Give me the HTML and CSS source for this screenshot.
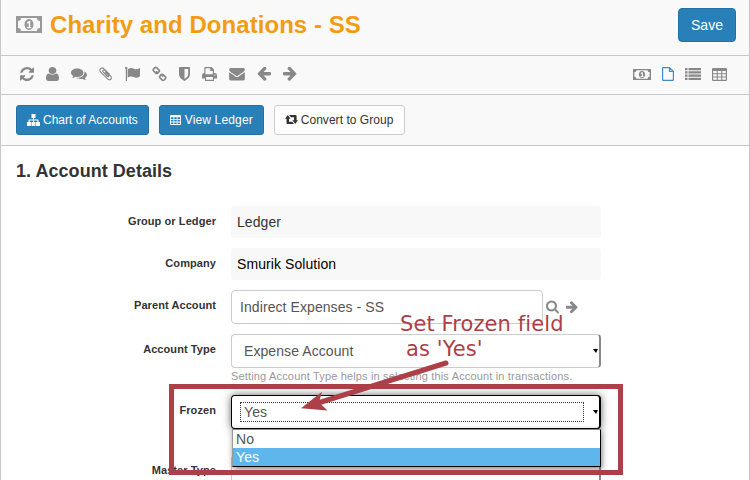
FILE: index.html
```html
<!DOCTYPE html>
<html lang="en">
<head>
<meta charset="utf-8">
<title>Charity and Donations - SS</title>
<link rel="stylesheet" href="styles.css">
</head>
<body>
<svg class="defs" width="0" height="0" aria-hidden="true">
  <symbol id="money" viewBox="0 0 26 17" preserveAspectRatio="none"><path fill-rule="evenodd" d="M0 0H26V17H0ZM5 2A3 3 0 0 1 2 5V12A3 3 0 0 1 5 15H21A3 3 0 0 1 24 12V5A3 3 0 0 1 21 2ZM13 3C19 3 19 14 13 14S7 3 13 3ZM10.700 6.800L12 7.700 12.700 7V11H11V12.200H15.300V11H14.300V5H12.800Z"/></symbol>
  <symbol id="right" viewBox="0 0 1536 1536"><path transform="matrix(-1 0 0 1 1536 32)" d="M1536 640v128q0 53-32.500 90.500t-84.500 37.500h-704l293 294q38 36 38 90t-38 90l-75 76q-37 37-90 37-52 0-91-37l-651-652q-37-37-37-90 0-52 37-91l651-650q38-38 91-38 52 0 90 38l75 74q38 38 38 91t-38 91l-293 293h704q52 0 84.500 37.500t32.500 90.500z"/></symbol>
  <symbol id="table" viewBox="0 0 15 13"><path fill-rule="evenodd" d="M1.300 0H13.700A1.300 1.300 0 0 1 15 1.300V11.700A1.300 1.300 0 0 1 13.700 13H1.300A1.300 1.300 0 0 1 0 11.700V1.300A1.300 1.300 0 0 1 1.300 0ZM1.200 3V5.200H4.700V3ZM5.800 3V5.200H9.200V3ZM10.300 3V5.200H13.800V3ZM1.200 6.300V8.500H4.700V6.300ZM5.800 6.300V8.500H9.200V6.300ZM10.300 6.300V8.500H13.800V6.300ZM1.200 9.600V11.800H4.700V9.600ZM5.800 9.600V11.800H9.200V9.600ZM10.300 9.600V11.800H13.800V9.600Z"/></symbol>
</svg>

<main class="page">
  <header class="titlebar">
    <svg class="title-icon" width="26" height="17"><use href="#money"/></svg>
    <h1>Charity and Donations - SS</h1>
    <button class="save">Save</button>
  </header>

  <nav class="toolbar">
    <div class="tools">
      <svg width="14" height="14" viewBox="0 0 1536 1536"><path d="M1511 928q0 5-1 7-64 268-268 434.500t-478 166.500q-146 0-282.500-55t-243.500-157l-129 129q-19 19-45 19t-45-19-19-45v-448q0-26 19-45t45-19h448q26 0 45 19t19 45-19 45l-137 137q71 66 161 102t187 36q134 0 250-65t186-179q11-17 53-117 8-23 30-23h192q13 0 22.500 9.500t9.500 22.500zm25-800v448q0 26-19 45t-45 19h-448q-26 0-45-19t-19-45 19-45l138-138q-148-137-349-137-134 0-250 65t-186 179q-11 17-53 117-8 23-30 23h-199q-13 0-22.500-9.500t-9.500-22.500v-7q65-268 270-434.500t480-166.500q146 0 284 55.500t245 156.500l130-129q19-19 45-19t45 19 19 45z"/></svg>
      <svg width="13" height="14" viewBox="256 128 1280 1536" preserveAspectRatio="none"><path d="M1536 1399q0 109-62.500 187t-150.500 78h-854q-88 0-150.500-78t-62.500-187q0-85 8.500-160.500t31.500-152 58.500-131 94-89 134.500-34.500q131 128 313 128t313-128q76 0 134.500 34.500t94 89 58.500 131 31.500 152 8.500 160.500zm-256-887q0 159-112.500 271.500t-271.500 112.500-271.500-112.500-112.500-271.500 112.500-271.500 271.500-112.500 271.500 112.500 112.500 271.500z"/></svg>
      <svg width="16" height="14" viewBox="0 0 16 14"><path d="M6.200 1.500C9.700 1.500 12.400 3.300 12.400 5.700S9.700 9.900 6.200 9.900C5.600 9.900 5 9.800 4.500 9.700 3.500 10.500 2.200 11 1 11 1.700 10.400 2.100 9.700 2.200 8.900 .8 8.100 0 7 0 5.700 0 3.300 2.700 1.500 6.200 1.500ZM13.500 4.400C15 5.200 16 6.400 16 7.800 16 9 15.200 10.100 13.900 10.900 14 11.700 14.500 12.600 15.200 13.200 13.900 13.200 12.600 12.600 11.600 11.800 9 12.300 6.600 11.800 5.300 10.800 10 11 13.900 8.400 13.500 4.400Z"/></svg>
      <svg class="clip" width="14" height="14" viewBox="0 0 14 14"><path d="M10.200 7 5 1.800C2.500-.4-.6 2.500 1.700 5.100L8.500 11.900C10.900 14.200 13.700 11.500 11.600 9L5.900 3.300C4.600 2.300 3 3.700 4.100 5L8.500 9.500C9.500 10.200 10.300 9.300 9.500 8.500L6.300 5.300"/></svg>
      <svg width="15" height="14" viewBox="0 0 15 14"><path d="M0 1.200A1.200 1.200 0 1 1 2 2.100V14H.8V2.100A1.200 1.200 0 0 1 0 1.200ZM2.600 2.400C6 .3 7.200 1 9.600 2 11.400 2.800 13 1.900 14.400 1.200 14.800 1 15 1.200 15 1.600V9C15 9.500 14.600 9.700 14 10 8.800 12.500 8.500 7.400 2.600 10.700Z"/></svg>
      <svg class="link" width="15" height="16" viewBox="0 0 15 16"><path d="M5.600 7.200 6.800 6Q7.900 4.900 6.800 3.800L4.900 1.900Q3.800.9 2.700 1.900L1.700 2.900Q.8 3.900 1.700 5L3.600 6.900Q4.600 7.900 5.700 7.100L4.600 5.800M9.200 8.600 8.100 9.800Q7.100 10.800 8.100 11.900L10 13.800Q11.100 14.800 12.200 13.800L13.200 12.800Q14.200 11.700 13.200 10.700L11.300 8.800Q10.200 7.900 9.200 8.600L10.500 9.900"/></svg>
      <svg width="11" height="14" viewBox="0 0 11 14"><path fill-rule="evenodd" d="M.7 0H10.300Q11 0 11 .7V7C11 10.500 8 12.600 5.500 14 3 12.600 0 10.500 0 7V.7Q0 0 .7 0ZM5.500 2V11.900C7.200 10.900 9.200 9.300 9.200 7V2Z"/></svg>
      <svg width="15" height="14" viewBox="0 0 15 14"><path fill-rule="evenodd" d="M3.300 0H9.600L12 2.400V6H12.700Q15 6 15 8.300V11.500H12V14H3V11.500H0V8.300Q0 6 2.300 6H2.300V1Q2.300 0 3.300 0ZM3.500 1.200V7.200H10.800V4H8.200V1.200ZM4.100 10V12.800H10.900V10ZM12.900 7.400A.7 .7 0 1 0 12.900 8.800 .7 .7 0 1 0 12.900 7.400Z"/></svg>
      <svg width="16" height="14" viewBox="0 128 1792 1600"><path d="M1792 710v794q0 66-47 113t-113 47h-1472q-66 0-113-47t-47-113v-794q44 49 101 87 362 246 497 345 57 42 92.500 65.500t94.500 48 110 24.500h2q51 0 110-24.500t94.500-48 92.500-65.500q170-123 498-345 57-39 100-87zm0-294q0 79-49 151t-122 123q-376 261-468 325-10 7-42.500 31t-54 38.800-52 32.500-57.500 27-50 9h-2q-23 0-50-9t-57.500-27-52-32.500-54-38.800-42.500-31q-91-64-262-182.500t-205-142.500q-62-42-117-115.500t-55-136.500q0-78 41.500-130t118.500-52h1472q65 0 112.500 47t47.500 113z"/></svg>
      <svg class="flip" width="14" height="14"><use href="#right"/></svg>
      <svg width="14" height="14"><use href="#right"/></svg>
    </div>
    <div class="views">
      <svg width="18" height="11"><use href="#money"/></svg>
      <svg class="active" width="12" height="14" viewBox="0 0 12 14"><path fill="none" stroke="currentColor" stroke-width="1.200" stroke-linejoin="round" d="M7.500.6H1.200Q.6.600 .6 1.200V12.800Q.6 13.400 1.200 13.400H10.800Q11.400 13.400 11.400 12.800V4.500L7.500.6V4.500H11.400"/></svg>
      <svg width="16" height="12" viewBox="0 0 16 12"><path d="M0 0H2.500V2.200H0ZM3.500 0H16V2.200H3.500ZM0 3.200H2.500V5.400H0ZM3.500 3.200H16V5.400H3.500ZM0 6.500H2.500V8.700H0ZM3.500 6.500H16V8.700H3.500ZM0 9.800H2.500V12H0ZM3.500 9.800H16V12H3.500Z"/></svg>
      <svg width="15" height="13"><use href="#table"/></svg>
    </div>
  </nav>

  <div class="actions">
    <button class="btn primary"><svg width="13" height="12" viewBox="0 0 13 12"><path d="M4.500 0H8.500V4H7V5.400H10.700Q11.500 5.400 11.500 6.200V8H13V12H9V8H10.300V6.500H7V8H8.500V12H4.500V8H6V6.500H2.700V8H4V12H0V8H1.500V6.200Q1.500 5.400 2.300 5.400H6V4H4.500Z"/></svg>Chart of Accounts</button>
    <button class="btn primary ledger"><svg width="11" height="10" viewBox="0 0 15 13" preserveAspectRatio="none"><use href="#table" width="15" height="13"/></svg>View Ledger</button>
    <button class="btn convert"><svg width="13" height="10" viewBox="0 0 13 10"><path d="M2.800 0 5.600 3.700H4V6.800H7.300L9 9H2.700Q1.500 9 1.500 7.900V3.700H0ZM4.100 0H10.400Q11.600 0 11.600 1.200V5.300H13L10.200 9 7.400 5.300H9V2.200H5.800Z"/></svg>Convert to Group</button>
  </div>

  <section class="form">
    <h2>1. Account Details</h2>
    <div class="row"><label>Group or Ledger</label><div class="static">Ledger</div></div>
    <div class="row"><label>Company</label><div class="static dark">Smurik Solution</div></div>
    <div class="row"><label>Parent Account</label>
      <div class="input-line">
        <div class="input">Indirect Expenses - SS</div>
        <svg width="13" height="14" viewBox="64 128 1664 1664"><path d="M1216 832q0-185-131.500-316.500t-316.500-131.500-316.500 131.500-131.500 316.500 131.500 316.500 316.500 131.500 316.500-131.500 131.500-316.500zm512 832q0 52-38 90t-90 38q-54 0-90-38l-343-342q-179 124-399 124-143 0-273.500-55.500t-225-150-150-225-55.500-273.500 55.500-273.500 150-225 225-150 273.500-55.500 273.500 55.500 225 150 150 225 55.500 273.500q0 220-124 399l343 343q37 37 37 90z"/></svg>
        <svg width="12" height="13"><use href="#right"/></svg>
      </div>
    </div>
    <div class="row"><label>Account Type</label>
      <div class="field">
        <div class="select"><span class="value">Expense Account</span><i class="caret"></i></div>
        <p class="help">Setting Account Type helps in selecting this Account in transactions.</p>
      </div>
    </div>
    <div class="row frozen"><label>Frozen</label>
      <div class="field">
        <div class="select focused"><span class="value">Yes</span><i class="caret"></i></div>
        <div class="menu"><div>No</div><div class="chosen">Yes</div></div>
      </div>
    </div>
    <div class="row"><label>Master Type</label><div class="field"><div class="select"></div></div></div>
  </section>

  <svg class="annotation" width="750" height="480" viewBox="0 0 750 480">
    <rect x="171.500" y="386.500" width="449" height="86" fill="none" stroke="#ac3f47" stroke-width="5"/>
    <path d="M446 363 318 403" stroke="#ac3f47" stroke-width="5" stroke-linecap="round"/>
    <path d="M301 408.300 322 391.700 319 402.500 327.500 410.500Z" fill="#ac3f47"/>
    <text x="400" y="331">Set Frozen field</text>
    <text x="406" y="356">as 'Yes'</text>
  </svg>
</main>
</body>
</html>
```
FILE: styles.css
```css
* { box-sizing: border-box; }

body {
  margin: 0;
  font-family: "Liberation Sans", Arial, sans-serif;
  font-size: 14px;
  color: #333;
  background: #fff;
}

button { font-family: inherit; }

svg { display: block; flex: none; fill: currentColor; }

.defs { position: absolute; }

.page {
  position: relative;
  width: 750px;
  height: 480px;
  overflow: hidden;
  border: solid #c7c7c7;
  border-width: 0 1px;
}

.titlebar, .toolbar, .actions {
  display: flex;
  background: #f9f9f9;
  border-bottom: 1px solid #c7c7c7;
}

.titlebar { height: 56px; padding: 8px 13px 0 15px; }
.title-icon { margin: 8px 8px 0 0; color: #999; }

h1 {
  flex: 1;
  margin: 0;
  padding-top: 3px;
  font-size: 24px;
  line-height: 28px;
  letter-spacing: .06px;
  color: #f39c12;
}

.save {
  width: 58px;
  height: 34px;
  padding: 0;
  border: 1px solid #2472a4;
  border-radius: 4px;
  background: #2980b9;
  color: #fff;
  font-size: 14px;
}

.toolbar {
  height: 39px;
  padding: 0 21px 2px 19px;
  justify-content: space-between;
  align-items: center;
  color: #888;
}

.tools, .views { display: flex; align-items: center; }
.tools { gap: 12px; }
.views { gap: 11px; margin-right: 1px; }
.flip { transform: scaleX(-1); }
.active { color: #428bca; }
.clip, .link { fill: none; stroke: currentColor; stroke-linecap: round; }
.clip { stroke-width: 1.1; }
.link { stroke-width: 1.7; }

.actions { height: 51px; padding: 10px 15px; gap: 10px; }

.btn {
  display: flex;
  align-items: center;
  height: 30px;
  padding: 0 10px;
  gap: 3px;
  border: 1px solid #ccc;
  border-radius: 3px;
  background: #fff;
  color: #333;
  font-size: 12px;
  line-height: 18px;
  white-space: nowrap;
}

.primary { border-color: #2472a4; background: #2980b9; color: #fff; }
.ledger { width: 105px; gap: 4px; letter-spacing: .15px; }
.convert { width: 131px; letter-spacing: .04px; }

.form { padding: 0 15px; letter-spacing: .08px; }

h2 { margin: 15px 0 25px; font-size: 18px; line-height: 20px; letter-spacing: .04px; }

.row { display: flex; gap: 15px; margin-bottom: 10px; }

.row label {
  width: 200px;
  padding-top: 8px;
  text-align: right;
  font-size: 11px;
  font-weight: bold;
  line-height: 14px;
  letter-spacing: .08px;
}

.static {
  width: 370px;
  height: 32px;
  padding: 0 6px;
  border-radius: 3px;
  background: #f8f8f8;
  line-height: 32px;
}

.dark { color: #000; }

.input-line { display: flex; align-items: center; color: #888; }
.input-line svg { margin-left: 3px; }
.input-line svg + svg { margin-left: 7px; }

.input {
  width: 312px;
  height: 34px;
  padding: 0 8px;
  border: 1px solid #ccc;
  border-radius: 4px;
  color: #555;
  line-height: 32px;
}

.field { position: relative; width: 370px; }

.select {
  display: flex;
  align-items: center;
  justify-content: space-between;
  height: 34px;
  padding-left: 8px;
  border: 1px solid #ccc;
  border-right: 2px solid #888;
  border-radius: 4px;
  background: #fff;
  color: #555;
}

.value { width: 344px; height: 20px; padding-left: 4px; line-height: 20px; }

.caret {
  width: 5px;
  height: 4px;
  margin-right: 1px;
  background: #000;
  clip-path: polygon(0 0, 100% 0, 60% 100%);
}

.help {
  margin: 2px 0 0;
  font-size: 11px;
  line-height: 13px;
  letter-spacing: .165px;
  color: #999;
  white-space: nowrap;
}

.frozen { margin: 12px 0 26px; }

.focused { border: 1px solid #000; border-right-width: 2px; box-shadow: 0 0 8px rgba(0, 0, 0, .6); }
.focused .value { outline: 1px dotted #333; outline-offset: -1px; }

.menu {
  position: absolute;
  z-index: 2;
  top: 34px;
  left: 1px;
  width: 369px;
  height: 38px;
  border: 1px solid #000;
  border-top-color: #888;
  border-left-color: #999;
  background: #fff;
  box-shadow: 1px 2px 6px rgba(0, 0, 0, .5);
  color: #555;
}

.menu div { height: 18px; padding-left: 3px; line-height: 18px; }
.menu .chosen { background: #5eb6ec; color: #fff; }

.annotation { position: absolute; z-index: 3; top: 0; left: -1px; }
.annotation text {
  font-family: "DejaVu Sans", sans-serif;
  font-size: 21px;
  letter-spacing: .1px;
  fill: #ac3f47;
}
```
